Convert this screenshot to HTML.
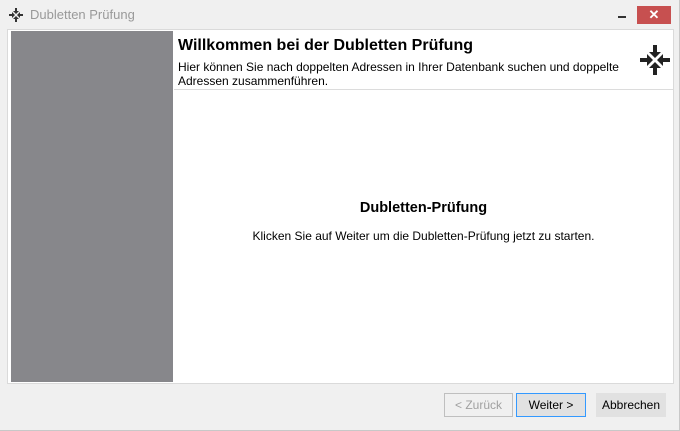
<!DOCTYPE html>
<html><head><style>
body{margin:0;width:680px;height:431px;background:#f0f0f0;font-family:"Liberation Sans",sans-serif;position:relative;overflow:hidden;font-size:12px}
.abs{position:absolute}
.btn{position:absolute;top:393px;height:24px;box-sizing:border-box;border:1px solid #acacac;background:#e1e1e1;text-align:center;line-height:22px;font-size:12px;color:#000}
</style></head><body>
<div class="abs" style="left:0;top:0;width:679px;height:430px;border:1px solid #c8c8c8;border-top:none;border-left:none"></div>
<svg class="abs" style="left:9px;top:8px" width="14" height="14" viewBox="0 0 14 14" fill="#333"><path d="M7 6L4 3h6zM7 8l3 3H4zM6 7L3 10V4zM8 7l3-3v6z"/><path d="M6 0h2v3H6zM6 11h2v3H6zM0 6h3v2H0zM11 6h3v2h-3z"/></svg>
<div class="abs" style="left:30px;top:7px;font-size:13px;color:#999">Dubletten Prüfung</div>
<div class="abs" style="left:618px;top:16px;width:8px;height:2px;background:#333"></div>
<div class="abs" style="left:637px;top:6px;width:34px;height:18px;background:#c75050;color:#fff;text-align:center;line-height:18px;font-size:13px;font-weight:bold">✕</div>
<div class="abs" style="left:7px;top:29px;width:667px;height:355px;background:#fff;border:1px solid #dadada;box-sizing:border-box"></div>
<div class="abs" style="left:11px;top:31px;width:162px;height:351px;background:#87878b"></div>
<div class="abs" style="left:174px;top:89px;width:499px;height:1px;background:#dcdcdc"></div>
<div class="abs" style="left:178px;top:37px;font-size:16px;font-weight:bold">Willkommen bei der Dubletten Prüfung</div>
<div class="abs" style="left:178px;top:60px;width:450px;font-size:12px;line-height:14px">Hier können Sie nach doppelten Adressen in Ihrer Datenbank suchen und doppelte Adressen zusammenführen.</div>
<svg class="abs" style="left:640px;top:45px" width="30" height="30" viewBox="0 0 30 30" fill="#222"><path d="M15 13L9 7h12zM15 17l6 6H9zM13 15L7 21V9zM17 15l6-6v12z"/><path d="M13 0h4v8h-4zM13 22h4v8h-4zM0 13h8v4H0zM22 13h8v4h-8z"/></svg>
<div class="abs" style="left:174px;top:200px;width:499px;text-align:center;font-size:14.5px;font-weight:bold">Dubletten-Prüfung</div>
<div class="abs" style="left:174px;top:229px;width:499px;text-align:center;font-size:12px">Klicken Sie auf Weiter um die Dubletten-Prüfung jetzt zu starten.</div>
<div class="btn" style="left:444px;width:69px;color:#a0a0a0;background:#f0f0f0;border-color:#bfbfbf">&lt; Zurück</div>
<div class="btn" style="left:516px;width:70px;border-color:#3399ff">Weiter &gt;</div>
<div class="btn" style="left:596px;width:70px;border-color:#e1e1e1">Abbrechen</div>
</body></html>
